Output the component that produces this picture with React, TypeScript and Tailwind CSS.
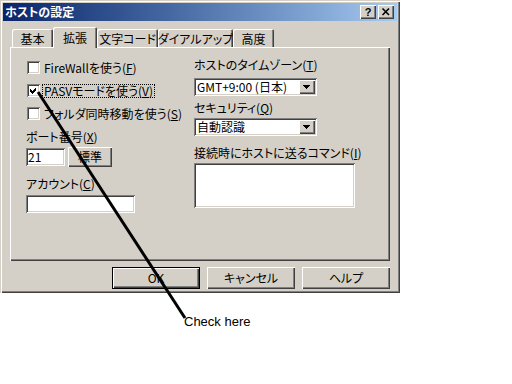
import React from "react";

const sunken =
  "shadow-[inset_1px_1px_#808080,inset_-1px_-1px_#ffffff,inset_2px_2px_#404040,inset_-2px_-2px_#d4d0c8]";
const raised =
  "shadow-[inset_1px_1px_#ffffff,inset_-1px_-1px_#404040,inset_-2px_-2px_#808080]";
const frame =
  "shadow-[inset_1px_1px_#d4d0c8,inset_2px_2px_#ffffff,inset_-1px_-1px_#404040,inset_-2px_-2px_#808080]";

const Acc = ({ k }: { k: string }) => (
  <>
    (<span className="underline">{k}</span>)
  </>
);

const Checkbox = ({ checked }: { checked?: boolean }) => (
  <div className={`w-[13px] h-[13px] bg-white ${sunken} shrink-0`}>
    {checked && (
      <svg width="13" height="13" viewBox="0 0 13 13" shapeRendering="crispEdges">
        <polygon points="3,5 5,7 9,3 9,6 5,10 3,8" fill="#000" />
      </svg>
    )}
  </div>
);

const Tab = ({ label, w, active }: { label: string; w: string; active?: boolean }) => (
  <div
    className={`flex items-center justify-center whitespace-nowrap bg-[#d4d0c8] rounded-t-[2px] shadow-[inset_1px_1px_#ffffff,inset_-1px_0_#404040,inset_-2px_0_#808080] ${w} ${
      active ? "h-[21px] -mb-[1px] relative z-10" : "h-[18px] pt-[2px]"
    }`}
  >
    {label}
  </div>
);

const Select = ({ value }: { value: string }) => (
  <div className={`flex items-center w-[123px] h-[18px] bg-white p-[2px] ${sunken}`}>
    <span className="flex-1 pl-[1px] leading-[14px] whitespace-nowrap">{value}</span>
    <div className={`flex items-center justify-center w-[16px] h-[14px] bg-[#d4d0c8] ${raised}`}>
      <svg width="16" height="14" viewBox="0 0 16 14" shapeRendering="crispEdges">
        <polygon points="4,5 11,5 7.5,9" fill="#000" />
      </svg>
    </div>
  </div>
);

const Button = ({ label, def }: { label: string; def?: boolean }) => (
  <div
    className={`flex items-center justify-center w-[88px] h-[22px] bg-[#d4d0c8] ${
      def
        ? "shadow-[inset_0_0_0_1px_#000000,inset_2px_2px_#ffffff,inset_-2px_-2px_#404040,inset_-3px_-3px_#808080]"
        : raised
    }`}
  >
    {label}
  </div>
);

export default function App() {
  return (
    <div className="relative w-[512px] h-[384px] bg-white text-black text-[12px] font-['Noto_Sans_CJK_JP',sans-serif] [font-feature-settings:'palt'] overflow-hidden">
      <div className={`flex flex-col w-[400px] h-[293px] bg-[#d4d0c8] p-[3px] ${frame}`}>
        {/* title bar */}
        <div className="flex items-center justify-between h-[18px] pl-[2px] pr-[3px] bg-linear-to-r from-[#0a246a] to-[#a6caf0]">
          <span className="text-white font-bold leading-none">ホストの設定</span>
          <div className="flex gap-[2px]">
            <div className={`flex items-center justify-center w-[16px] h-[14px] bg-[#d4d0c8] ${raised} font-['Liberation_Sans',sans-serif] font-bold text-[11px] leading-none`}>
              ?
            </div>
            <div className={`flex items-center justify-center w-[16px] h-[14px] bg-[#d4d0c8] ${raised}`}>
              <svg width="16" height="14" viewBox="0 0 16 14">
                <path d="M4.5 3.5 L11 10 M11 3.5 L4.5 10" stroke="#000" strokeWidth="1.6" />
              </svg>
            </div>
          </div>
        </div>

        {/* tabs */}
        <div className="flex items-end h-[20px] mt-[6px] ml-[9px]">
          <Tab label="基本" w="w-[41px]" />
          <Tab label="拡張" w="w-[44px]" active />
          <Tab label="文字コード" w="w-[61px]" />
          <Tab label="ダイアルアップ" w="w-[75px]" />
          <Tab label="高度" w="w-[41px]" />
        </div>

        {/* panel */}
        <div className="flex ml-[7px] w-[380px] h-[214px] pl-[16px] pt-[9px] shadow-[inset_1px_1px_#ffffff,inset_-1px_-1px_#404040,inset_-2px_-2px_#808080]">
          <div className="flex flex-col w-[168px]">
            <div className="flex items-center h-[23px] pl-[1px] gap-[2px]">
              <Checkbox />
              <span className="border border-transparent px-[1px] leading-[12px]">
                FireWallを使う<Acc k="F" />
              </span>
            </div>
            <div className="flex items-center h-[23px] pl-[1px] gap-[2px]">
              <Checkbox checked />
              <span className="border border-dotted border-black px-[1px] leading-[12px]">
                PASVモードを使う<Acc k="V" />
              </span>
            </div>
            <div className="flex items-center h-[23px] pl-[1px] gap-[2px]">
              <Checkbox />
              <span className="border border-transparent px-[1px] leading-[12px]">
                フォルダ同時移動を使う<Acc k="S" />
              </span>
            </div>
            <div className="mt-[5px] leading-[14px]">
              ポート番号<Acc k="X" />
            </div>
            <div className="flex items-center h-[20px] mt-[3px]">
              <div className={`w-[39px] h-[18px] bg-white pl-[2px] leading-[18px] ${sunken}`}>21</div>
              <div className={`flex items-center justify-center ml-[3px] w-[44px] h-[20px] bg-[#d4d0c8] ${raised}`}>
                標準
              </div>
            </div>
            <div className="mt-[10px] leading-[14px]">
              アカウント<Acc k="C" />
            </div>
            <div className={`mt-[4px] w-[109px] h-[18px] bg-white ${sunken}`} />
          </div>

          <div className="flex flex-col">
            <div className="mt-[2px] leading-[14px]">
              ホストのタイムゾーン<Acc k="T" />
            </div>
            <div className="mt-[6px]">
              <Select value="GMT+9:00 (日本)" />
            </div>
            <div className="mt-[5px] leading-[14px]">
              セキュリティ<Acc k="Q" />
            </div>
            <div className="mt-[3px]">
              <Select value="自動認識" />
            </div>
            <div className="mt-[10px] leading-[14px]">
              接続時にホストに送るコマンド<Acc k="I" />
            </div>
            <div className={`mt-[3px] w-[161px] h-[45px] bg-white ${sunken}`} />
          </div>
        </div>

        {/* buttons */}
        <div className="flex justify-end gap-[7px] ml-[7px] w-[380px] mt-[6px]">
          <Button label="OK" def />
          <Button label="キャンセル" />
          <Button label="ヘルプ" />
        </div>
      </div>

      <div className="mt-[21px] pl-[184px] font-['Liberation_Sans',sans-serif] text-[13px] leading-[15px]">
        Check here
      </div>

      <svg className="absolute left-0 top-0 pointer-events-none" width="512" height="384">
        <line x1="38" y1="92" x2="185" y2="318" stroke="#000" strokeWidth="3" />
      </svg>
    </div>
  );
}
